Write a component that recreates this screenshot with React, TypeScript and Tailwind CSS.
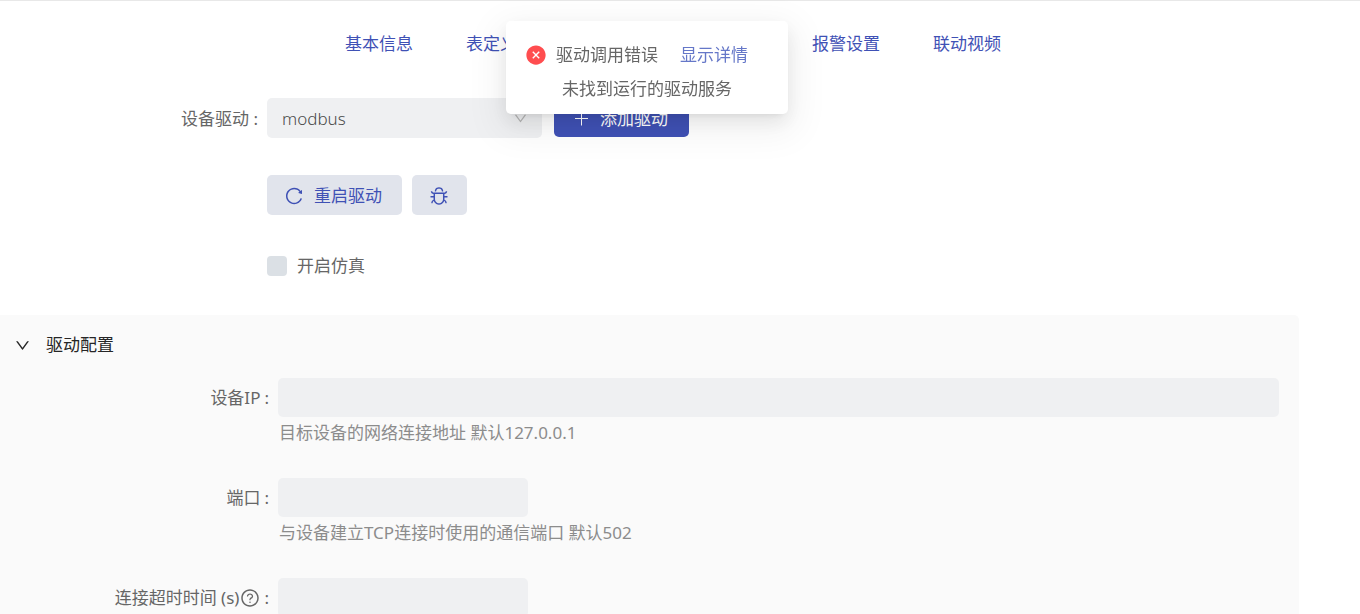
import { useState } from "react";
import type { ReactNode } from "react";
import {
	AiFillCloseCircle,
	AiOutlineBug,
	AiOutlineDown,
	AiOutlineQuestionCircle,
	AiOutlineReload,
} from "react-icons/ai";

const TAB_GROUPS = [
	["基本信息", "表定义"],
	["报警设置", "联动视频"],
];

export default function App() {
	const [open, setOpen] = useState(true);

	return (
		<div className="h-screen overflow-hidden border-t border-[#e8e8e8] bg-white font-['Noto_Sans','Noto_Sans_CJK_SC',sans-serif] text-[17px] leading-6 text-[#666666]">
			<ErrorMessage />

			<nav className="flex justify-center gap-[295px] pt-[31px] pr-[14px]">
				{TAB_GROUPS.map((group) => (
					<div key={group[0]} className="flex gap-[53px]">
						{group.map((tab) => (
							<a key={tab} href="#" className="text-[#3f51b5]">
								{tab}
							</a>
						))}
					</div>
				))}
			</nav>

			<section className="mt-[42px] flex flex-col">
				<div className="flex items-center">
					<label htmlFor="driver" className="w-[259px] pt-px pr-px text-right">
						设备驱动 :
					</label>
					<div className="relative ml-2 w-[275px]">
						<select
							id="driver"
							defaultValue="modbus"
							className="h-10 w-full appearance-none rounded-[5px] bg-[#eff0f2] px-[15px] pt-px font-light text-[#4a4a4a]"
						>
							<option value="modbus">modbus</option>
						</select>
						<AiOutlineDown className="pointer-events-none absolute top-[13px] right-[14px] size-[15px] text-[#b5b5b5]" />
					</div>
					<button
						type="button"
						className="mb-px ml-3 flex h-[39px] w-[135px] items-center justify-center gap-[10px] rounded-[5px] bg-[#3f51b5] pt-[2px] pr-[3px] text-white"
					>
						<svg
							viewBox="0 0 18 18"
							className="size-[18px]"
							fill="none"
							stroke="currentColor"
							aria-hidden="true"
						>
							<path d="M9.5 2.5v13M3 8.5h13" />
						</svg>
						添加驱动
					</button>
				</div>

				<div className="mt-[37px] ml-[267px] flex gap-[10px]">
					<button
						type="button"
						className="flex h-10 w-[135px] items-center justify-center gap-[10px] rounded-[5px] bg-[#e1e4ec] pt-px pr-[3px] text-[#3f51b5]"
					>
						<AiOutlineReload className="size-5" />
						重启驱动
					</button>
					<button
						type="button"
						aria-label="调试"
						className="flex h-10 w-[55px] items-center justify-center rounded-[5px] bg-[#e1e4ec] pt-px pr-px text-[#3f51b5]"
					>
						<AiOutlineBug className="size-5" />
					</button>
				</div>

				<label className="mt-[39px] ml-[267px] flex items-center gap-[10px] self-start">
					<input
						type="checkbox"
						className="size-5 appearance-none rounded-sm bg-[#dbe0e5] checked:bg-[#3f51b5]"
					/>
					开启仿真
				</label>
			</section>

			<section className="mt-[37px] mr-[61px] rounded-r-[5px] bg-[#fafafa] pr-5 pb-5">
				<button
					type="button"
					onClick={() => setOpen(!open)}
					className="flex h-[60px] w-full items-center gap-[15px] pl-[14px] text-[#262626]"
				>
					<AiOutlineDown className="size-[17px]" />
					驱动配置
				</button>
				{open && (
					<div className="flex flex-col gap-8 pt-[3px]">
						<Field
							id="ip"
							label="设备IP"
							help="目标设备的网络连接地址 默认127.0.0.1"
							wide
						/>
						<Field
							id="port"
							label="端口"
							help="与设备建立TCP连接时使用的通信端口 默认502"
						/>
						<Field
							id="timeout"
							label={
								<>
									连接超时时间 (s)
									<AiOutlineQuestionCircle className="ml-px size-5" />
								</>
							}
						/>
					</div>
				)}
			</section>
		</div>
	);
}

function Field({
	id,
	label,
	help,
	wide,
}: {
	id: string;
	label: ReactNode;
	help?: string;
	wide?: boolean;
}) {
	return (
		<div className="flex">
			<label
				htmlFor={id}
				className="flex h-10 w-[270px] shrink-0 items-center justify-end"
			>
				{label}
				<span className="ml-1 pr-px">:</span>
			</label>
			<div className="ml-2 flex-1">
				<input
					id={id}
					type="text"
					className={`block h-[39px] rounded-[5px] bg-[#eff0f2] px-[14px] outline-none ${wide ? "w-full" : "w-[250px]"}`}
				/>
				{help && <p className="pt-1 pb-px pl-px text-[#8c8c8c]">{help}</p>}
			</div>
		</div>
	);
}

// Floating notice over the top of the page
function ErrorMessage() {
	return (
		<div className="pointer-events-none fixed inset-x-0 top-[21px] z-10 flex justify-center pr-[66px]">
			<div
				role="alert"
				className="pointer-events-auto min-w-[282px] rounded-[5px] bg-white px-5 pt-[17px] pb-2 shadow-[0_4px_8px_-5px_rgba(0,0,0,0.12),0_8px_20px_rgba(0,0,0,0.08),0_11px_35px_10px_rgba(0,0,0,0.05)]"
			>
				<div className="flex h-[34px] items-center">
					<AiFillCloseCircle className="-ml-px mr-[9px] size-[22px] text-[#ff4d4f]" />
					驱动调用错误
					<a href="#" className="ml-[22px] text-[#6577c8]">
						显示详情
					</a>
				</div>
				<p className="h-[34px] text-center leading-[34px]">未找到运行的驱动服务</p>
			</div>
		</div>
	);
}
